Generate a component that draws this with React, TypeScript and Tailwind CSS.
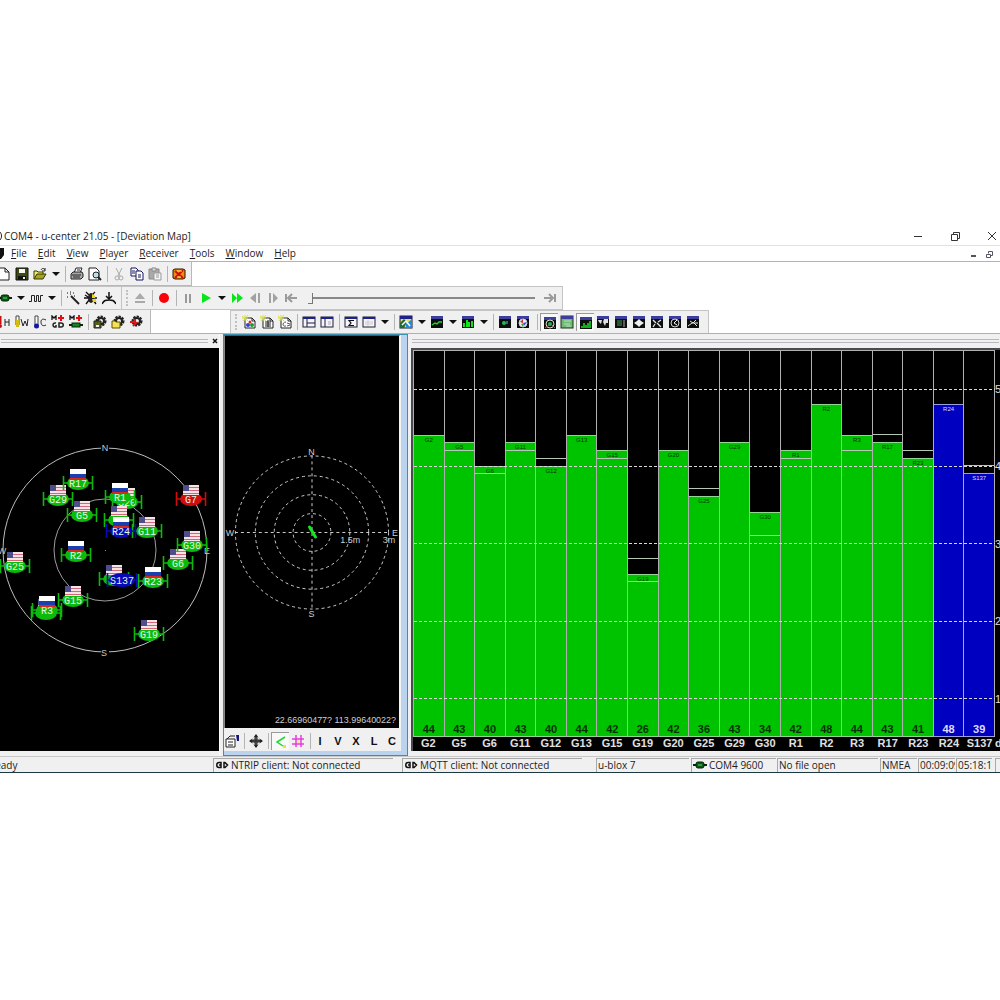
import React from "react";

type IconMap = Record<string, React.ReactNode>;

const windowFrame = (
  <>
    <rect x="1" y="2" width="12" height="10" fill="#f4f4fa" stroke="#1c1c38" />
    <rect x="1" y="2" width="12" height="2" fill="#20208a" />
  </>
);
const darkFrame = (
  <>
    <rect x="1" y="1" width="12" height="12" fill="#0c100c" />
    <rect x="1" y="1" width="12" height="3" fill="#3d3d9e" />
  </>
);
const chip = (
  <>
    <path d="M0 7H14" stroke="#052805" strokeWidth="2" />
    <rect x="3" y="4" width="8" height="6" rx="2" fill="#0b5a16" stroke="#032003" />
    <rect x="5" y="6" width="4" height="2" fill="#2f9b3c" />
  </>
);
const gear = (
  <>
    <circle cx="8" cy="6" r="4" fill="none" stroke="#222" strokeWidth="3" strokeDasharray="2 1" />
    <circle cx="8" cy="6" r="3" fill="none" stroke="#222" strokeWidth="2" />
  </>
);
const newPage = (
  <>
    <path d="M3 3H10L13 6V13H3Z" fill="#fff" stroke="#222" />
    <path d="M10 3V6H13" fill="none" stroke="#222" />
    <path d="M0 1L6 6M6 0L1 6M3 0V6M0 3H6" stroke="#d5df4a" />
  </>
);
const resetGlyph = (
  <>
    <path d="M1 5V1L3 3L5 1V5" fill="none" stroke="#111" strokeWidth="1.3" />
    <path d="M10 0V6M7 3H13" stroke="#e01010" strokeWidth="2" />
  </>
);

const icons: IconMap = {
  newDoc: <path d="M1 1H8L12 5V13H1ZM8 1V5H12" fill="#fff" stroke="#222" />,
  save: (
    <>
      <path d="M1 1H13V13H1Z" fill="#3d4a10" stroke="#111" />
      <path d="M4 2H10V6H4Z" fill="#f4f4f4" />
      <path d="M3 9H11V13H3Z" fill="#111" />
      <path d="M8 10H10V12H8Z" fill="#eee" />
    </>
  ),
  open: (
    <>
      <path d="M1 12V4H4L5 5H10V7" fill="#f0ea6c" stroke="#333a00" />
      <path d="M1 12L4 7H13L10 12Z" fill="#a8a320" stroke="#333a00" />
      <path d="M8 3C9 1 11 1 12 3M12 1V4H9" fill="none" stroke="#222" />
    </>
  ),
  print: (
    <>
      <path d="M4 6L6 1H12L10 6" fill="#fff" stroke="#222" />
      <path d="M1 7L3 5H12L13 7V10L11 12H1Z" fill="#aaa" stroke="#222" />
      <path d="M2 8H11M3 10H10M7 3H10" stroke="#222" />
    </>
  ),
  preview: (
    <>
      <path d="M1 1H8L11 4V13H1Z" fill="#fff" stroke="#222" />
      <circle cx="8" cy="8" r="3" fill="#b8e2e6" stroke="#222" />
      <path d="M10 10L13 13" stroke="#222" strokeWidth="2" />
    </>
  ),
  cut: (
    <>
      <path d="M4 1L8 9M10 1L6 9" stroke="#aaa" />
      <circle cx="5" cy="11" r="2" fill="none" stroke="#aaa" />
      <circle cx="9" cy="11" r="2" fill="none" stroke="#aaa" />
    </>
  ),
  copy: (
    <>
      <path d="M1 1H6L8 3V9H1Z" fill="#fff" stroke="#15155e" />
      <path d="M2 4H5M2 6H5" stroke="#15155e" />
      <path d="M6 4H11L13 6V13H6Z" fill="#fff" stroke="#15155e" />
      <path d="M8 8H11M8 10H11" stroke="#15155e" />
    </>
  ),
  paste: (
    <>
      <path d="M1 2H11V12H1Z" fill="#aaa" stroke="#888" />
      <path d="M4 1H8V4H4Z" fill="#ddd" stroke="#888" />
      <path d="M6 6H13V13H6Z" fill="#f4f4f4" stroke="#999" />
      <path d="M8 8H11M8 10H11" stroke="#999" />
    </>
  ),
  clear: (
    <>
      <path d="M1 3L3 2H11L13 3V11L11 12H3L1 11Z" fill="#ee8c16" stroke="#2c1400" />
      <path d="M3 4L11 11M11 3L3 11" stroke="#d40a0a" strokeWidth="2" />
      <path d="M5 4H10M5 10H9" stroke="#ffe14a" />
    </>
  ),
  connect: chip,
  wave: <path d="M0 10.5H2.5V4.5H5.5V10.5H7.5V4.5H9.5V10.5H11.5V4.5H14" fill="none" stroke="#222" />,
  wand: (
    <>
      <path d="M5 5L13 13" stroke="#222" strokeWidth="2" />
      <path d="M1 2H2M4 1H5M7 2H8M1 6H2M8 5H9M4 3H5" stroke="#555" strokeWidth="1.4" />
    </>
  ),
  bug: (
    <>
      <path d="M2 1L5 4M11 1L8 4M0 7H13M2 13L5 9M12 13L9 9M1 4L12 11" stroke="#111" strokeWidth="1.3" />
      <ellipse cx="7" cy="7" rx="3" ry="5" fill="#222" />
      <path d="M8 3L11 5V7H8ZM8 8H12V11H9Z" fill="#efd41a" />
    </>
  ),
  autobaud: <path d="M0 13C2 9 4 9 7 9S12 9 14 13M7 1V8M4 5L7 8L10 5" fill="none" stroke="#111" strokeWidth="1.5" />,
  eject: <path d="M7 2L12 8H2ZM2 10H12V12H2Z" fill="#aaa" />,
  record: <circle cx="7" cy="7" r="5" fill="#fb0007" />,
  pause: <path d="M5 3V12M9 3V12" stroke="#999" strokeWidth="2" />,
  play: <path d="M3 2L12 7L3 12Z" fill="#09e51b" />,
  forward: <path d="M2 2L7 7L2 12ZM7 2L13 7L7 12Z" fill="#09e51b" />,
  stepBack: <path d="M8 2V12L2 7ZM10 2H12V12H10Z" fill="#a2a2a2" />,
  stepNext: <path d="M3 2H5V12H3ZM7 2V12L12 7Z" fill="#a2a2a2" />,
  first: <path d="M2 3V11M13 7H5M8 3L4 7L8 11" fill="none" stroke="#9a9a9a" strokeWidth="2" />,
  last: <path d="M12 3V11M1 7H9M6 3L10 7L6 11" fill="none" stroke="#9a9a9a" strokeWidth="2" />,
  thermoH: (
    <>
      <path d="M3 1V9" stroke="#c81010" strokeWidth="3" />
      <circle cx="3" cy="11" r="2" fill="#c81010" />
      <path d="M8 4V11M12 4V11M8 7H12" stroke="#222" />
    </>
  ),
  thermoW: (
    <>
      <path d="M1 1H4V10H1Z" fill="#fff" stroke="#444" />
      <path d="M1 5H4V12H1Z" fill="#d4bd12" />
      <path d="M6 4L8 11L10 6L12 11L13 4" fill="none" stroke="#222" />
    </>
  ),
  thermoC: (
    <>
      <path d="M2 1H5V10H2Z" fill="#fff" stroke="#444" />
      <circle cx="3.5" cy="11" r="2.5" fill="#1515a8" />
      <path d="M13 5C9 3 8 5 8 7S9 12 13 10" fill="none" stroke="#222" />
    </>
  ),
  ntripReset: (
    <>
      {resetGlyph}
      <path d="M5 8C1 7 1 13 5 12V10M8 8H10C13 8 13 12 10 12H8Z" fill="none" stroke="#222" strokeWidth="1.5" />
    </>
  ),
  chipReset: (
    <>
      {resetGlyph}
      <path d="M0 10H14" stroke="#052805" strokeWidth="2" />
      <rect x="3" y="8" width="8" height="4" fill="#138326" stroke="#052805" />
    </>
  ),
  gearSave: (
    <>
      {gear}
      <path d="M1 6H8V13H1Z" fill="#586010" stroke="#222" />
      <path d="M3 10H6V12H3Z" fill="#eee" />
    </>
  ),
  gearOpen: (
    <>
      {gear}
      <path d="M1 6H4L5 7H9V13H1Z" fill="#f6e353" stroke="#5d5200" />
    </>
  ),
  gearReset: (
    <>
      {gear}
      <path d="M1 7H8M4 4L8 7L4 11" fill="none" stroke="#de1717" strokeWidth="2" />
      <circle cx="8" cy="6" r="1" fill="#fff" />
    </>
  ),
  pageColor: (
    <>
      {newPage}
      <circle cx="8" cy="7" r="1.5" fill="#e22" />
      <circle cx="6" cy="10" r="2" fill="#2b44d4" />
      <circle cx="10" cy="10" r="2" fill="#209b31" />
    </>
  ),
  pageTable: (
    <>
      {newPage}
      <path d="M5 7H11M5 9H11M5 11H11M8 5V12" stroke="#222" />
    </>
  ),
  pageCode: (
    <>
      {newPage}
      <path d="M8 7C4 7 4 12 8 11M9 8L12 9M9 11L12 10" fill="none" stroke="#555" />
    </>
  ),
  splitA: (
    <>
      {windowFrame}
      <path d="M5 4V12M5 8H13" stroke="#1c1c38" />
    </>
  ),
  splitB: (
    <>
      {windowFrame}
      <path d="M5 4V12" stroke="#1c1c38" />
      <path d="M8 7H11M8 9H11" stroke="#aaa" />
    </>
  ),
  sigma: (
    <>
      {windowFrame}
      <path d="M10 5.5H5L7 8L5 10.5H10" fill="none" stroke="#111" strokeWidth="1.2" />
    </>
  ),
  blank: (
    <>
      {windowFrame}
      <path d="M3 7H11M3 9H11M6 5V11" stroke="#ccc" />
    </>
  ),
  mapView: (
    <>
      <rect x="1" y="1" width="12" height="12" fill="#e7dc50" stroke="#161633" />
      <rect x="1" y="1" width="12" height="3" fill="#20208a" />
      <path d="M1 13V8L5 4L8 7L5 13Z" fill="#1d6a38" />
      <path d="M7 13V9L12 5L13 13Z" fill="#258bd4" />
      <path d="M3 10L7 6L11 11" fill="none" stroke="#fff" strokeWidth="1.5" />
    </>
  ),
  lineView: (
    <>
      {darkFrame}
      <path d="M2 10L5 8L7 9L9 7H12" fill="none" stroke="#20d33a" strokeWidth="1.4" />
    </>
  ),
  barView: (
    <>
      {darkFrame}
      <path d="M3 12V8M6 12V5M8 12V7M11 12V6" stroke="#10e61f" strokeWidth="2" />
    </>
  ),
  camera: (
    <>
      {darkFrame}
      <circle cx="6" cy="8" r="2" fill="#23bd4d" />
      <path d="M8 6H10V9H8Z" fill="#1f7284" />
    </>
  ),
  ring: (
    <>
      {darkFrame}
      <circle cx="7" cy="8" r="4" fill="#f0f0f0" stroke="#cfcfcf" />
      <path d="M4 7L7 4V8Z" fill="#d03131" />
      <path d="M7 8L11 7L8 11Z" fill="#3553d0" />
      <path d="M5 9L8 8L7 12Z" fill="#20b052" />
    </>
  ),
  sky: (
    <>
      {darkFrame}
      <circle cx="7" cy="8" r="4" fill="none" stroke="#d5ddd5" />
      <circle cx="7" cy="8" r="2" fill="#29ad3a" />
      <path d="M2 12L6 9M12 12L9 9" stroke="#db4f4f" />
    </>
  ),
  green: (
    <>
      <rect x="1" y="1" width="12" height="12" fill="#6fbb75" stroke="#203020" />
      <rect x="1" y="1" width="12" height="3" fill="#3d3d9e" />
      <path d="M4 6H11M4 9H10M6 11H11" stroke="#b6e3b8" />
    </>
  ),
  hist: (
    <>
      {darkFrame}
      <path d="M3 12V10M5 12V7M7 12V9M9 12V7M11 12V5" stroke="#10e61f" strokeWidth="1.5" />
    </>
  ),
  world: (
    <>
      {darkFrame}
      <path d="M2 5H6L5 9L3 7ZM8 4H12V8H10L9 11L7 7Z" fill="#e0e0e0" />
    </>
  ),
  table: (
    <>
      {darkFrame}
      <path d="M3 6H8M3 8H8M3 10H8" stroke="#3f9f49" />
      <path d="M10 5V12" stroke="#aaa" />
    </>
  ),
  compass: (
    <>
      {darkFrame}
      <path d="M7 4L9 6L12 8L9 10L7 12L5 10L2 8L5 6Z" fill="#f0f0f0" />
    </>
  ),
  cross: (
    <>
      {darkFrame}
      <path d="M3 5L6 8M11 5L8 7M7 8L11 12M3 12L5 9" stroke="#e8e8e8" strokeWidth="1.3" />
    </>
  ),
  clock: (
    <>
      {darkFrame}
      <circle cx="7" cy="8" r="4" fill="none" stroke="#d5d5d5" />
      <path d="M9 5L6 8L9 10" fill="none" stroke="#fff" />
    </>
  ),
  spark: (
    <>
      {darkFrame}
      <path d="M2 11L6 8H12M4 6L7 8L10 5M8 8L11 11" fill="none" stroke="#e8e8e8" />
    </>
  ),
  props: (
    <>
      <path d="M1 5H10V13H1Z" fill="#fff" stroke="#222" />
      <path d="M3 8H8M3 11H8M2 5L5 2H10" fill="none" stroke="#222" />
      <path d="M11 1H14V7H12Z" fill="#16167a" />
    </>
  ),
  center: (
    <>
      <path d="M7 1V13M1 7H13" stroke="#222" strokeWidth="1.3" />
      <path d="M4.5 3.5L7 0L9.5 3.5ZM4.5 10.5L7 14L9.5 10.5ZM3.5 4.5L0 7L3.5 9.5ZM10.5 4.5L14 7L10.5 9.5Z" fill="#222" />
      <path d="M5 5H9V9H5Z" fill="none" stroke="#222" />
    </>
  ),
  track: (
    <>
      <path d="M11 2L3 7L9 11" fill="none" stroke="#1ad930" strokeWidth="1.5" />
      <path d="M9 10H12V13H9Z" fill="#f0df2c" />
    </>
  ),
  grid: (
    <>
      <path d="M5 1V13M10 1V13M1 5H13M1 10H13" stroke="#e33ce0" strokeWidth="1.5" />
      <path d="M6 6H9V9H6Z" fill="#f8e49a" />
    </>
  ),
  link: (
    <>
      <path d="M6 4.5H4C1 4.5 1 9.5 4 9.5H6ZM4 7H6" fill="none" stroke="#111" strokeWidth="1.5" />
      <path d="M9 4.5H10L12.5 7L10 9.5H9Z" fill="none" stroke="#111" strokeWidth="1.5" />
    </>
  ),
};

function Icon({ name }: { name: string }) {
  return (
    <svg viewBox="0 0 14 14" className="h-[14px] w-[14px] shrink-0" aria-hidden="true">
      {icons[name]}
    </svg>
  );
}

function Tools({ items }: { items: string }) {
  return (
    <>
      {items.split(" ").map((item, i) => {
        if (item === "|") {
          return (
            <span key={i} className="flex w-[6px] shrink-0 justify-center">
              <span className="h-4 w-px bg-[#b4b4b4]" />
            </span>
          );
        }
        if (item === "v") {
          return (
            <button key={i} aria-label="More" className="flex w-[13px] shrink-0 items-center justify-center">
              <svg viewBox="0 0 8 4" className="h-1 w-2" aria-hidden="true">
                <path d="M0 0H8L4 4Z" fill="#111" />
              </svg>
            </button>
          );
        }
        if (item === ":") {
          return <span key={i} className="mr-[3px] ml-1 h-4 w-[2px] shrink-0 border-r-2 border-dotted border-[#c0c0c0]" />;
        }
        const pressed = item.startsWith("!");
        const name = pressed ? item.slice(1) : item;
        return (
          <button
            key={i}
            aria-label={name}
            className={
              pressed
                ? "flex h-[18px] w-[18px] shrink-0 items-center justify-center border-t border-l border-[#9a9a9a] bg-[#f8f8f8]"
                : "flex h-[18px] w-[18px] shrink-0 items-center justify-center"
            }
          >
            <Icon name={name} />
          </button>
        );
      })}
    </>
  );
}

const menus = ["File", "Edit", "View", "Player", "Receiver", "Tools", "Window", "Help"];

type Satellite = { id: string; x: number; y: number; color: string; flag?: "us" | "ru"; hidden?: boolean };
const G = "#0cba0c";
const B = "#0909b8";
/* Entries marked hidden sit under a neighbour, so their label is left out. */
const satellites: Satellite[] = [
  { id: "G29", x: 58, y: 151, color: G, flag: "us" },
  { id: "R17", x: 78, y: 135, color: G, flag: "ru" },
  { id: "G5", x: 82, y: 167, color: G, flag: "us" },
  { id: "G20", x: 127, y: 154, color: G, flag: "us" },
  { id: "R1", x: 120, y: 149, color: G, flag: "ru" },
  { id: "G12", x: 119, y: 172, color: G, flag: "us", hidden: true },
  { id: "G11", x: 147, y: 183, color: G, flag: "us" },
  { id: "R24", x: 121, y: 183, color: B, flag: "ru" },
  { id: "G7", x: 191, y: 151, color: "#d00c0c", flag: "us" },
  { id: "G6", x: 178, y: 215, color: G, flag: "us" },
  { id: "G30", x: 192, y: 197, color: G, flag: "us" },
  { id: "R2", x: 76, y: 207, color: G, flag: "ru" },
  { id: "G25", x: 15, y: 218, color: G, flag: "us" },
  { id: "G2", x: 114, y: 231, color: G, flag: "us", hidden: true },
  { id: "S137", x: 122, y: 232, color: B },
  { id: "R23", x: 153, y: 233, color: G, flag: "ru" },
  { id: "G15", x: 73, y: 252, color: G, flag: "us" },
  { id: "G13", x: 46, y: 265, color: G, flag: "us", hidden: true },
  { id: "R3", x: 47, y: 262, color: G, flag: "ru" },
  { id: "G19", x: 149, y: 286, color: G, flag: "us" },
];

function SatelliteMark({ sat }: { sat: Satellite }) {
  return (
    <g transform={`translate(${sat.x} ${sat.y})`}>
      <path d="M-14.5 0H14.5M-14.5 -7V7M14.5 -7V7" stroke={sat.color} strokeWidth="1.6" />
      <ellipse cx="0" cy="0" rx={sat.id.length > 3 ? 13 : 11} ry="7" fill={sat.color} />
      {sat.flag === "ru" && (
        <>
          <rect x="-8" y="-14" width="16" height="5" fill="#fff" />
          <rect x="-8" y="-9" width="16" height="4" fill="#1c3fae" />
          <rect x="-8" y="-5" width="16" height="2" fill="#d8281e" />
        </>
      )}
      {sat.flag === "us" && (
        <>
          <rect x="-8" y="-14" width="16" height="10" fill="#f6e3e6" />
          <path d="M-8 -11.5H8M-8 -8.5H8M-8 -5.5H8" stroke="#d2667c" />
          <rect x="-8" y="-14" width="6" height="6" fill="#4e4e8c" />
        </>
      )}
      {!sat.hidden && (
        <text y="4" textAnchor="middle" fontSize="10" fill="#e4f6e4">
          {sat.id}
        </text>
      )}
    </g>
  );
}

function SkyView() {
  return (
    <svg
      viewBox="0 0 219 403"
      preserveAspectRatio="xMinYMid slice"
      className="min-h-0 w-full flex-1 bg-black font-['Liberation_Mono',monospace]"
      role="img"
      aria-label="Satellite position view"
    >
      <circle cx="105" cy="202" r="102" fill="none" stroke="#bdbdbd" />
      <circle cx="105" cy="202" r="51" fill="none" stroke="#9c9c9c" />
      <rect x="105" y="202" width="1" height="1" fill="#888" />
      <g fill="#c8c8c8" fontSize="9" textAnchor="middle" className="font-['Liberation_Sans',sans-serif]">
        <rect x="101" y="97" width="8" height="6" fill="#000" />
        <rect x="101" y="301" width="8" height="6" fill="#000" />
        <text x="105" y="103">N</text>
        <text x="104" y="308">S</text>
        <text x="2" y="206">W</text>
        <text x="207" y="206">E</text>
      </g>
      {satellites.map((s) => (
        <SatelliteMark key={s.id} sat={s} />
      ))}
    </svg>
  );
}

function DeviationMap() {
  return (
    <svg
      viewBox="0 0 175 392"
      className="min-h-0 w-full flex-1 bg-black font-['Liberation_Sans',sans-serif]"
      role="img"
      aria-label="Deviation map"
    >
      <g fill="none" stroke="#cfcfcf" strokeDasharray="3 3">
        {[19, 38, 57, 77].map((r) => (
          <circle key={r} cx="87.5" cy="196.5" r={r} />
        ))}
        <path d="M87.5 119V274M10 196.5H165" />
      </g>
      <path d="M85 191L91 201" stroke="#12e81c" strokeWidth="3" strokeLinecap="round" />
      <g fill="#cfcfcf" fontSize="9" textAnchor="middle">
        <text x="87" y="119">N</text>
        <text x="87" y="281">S</text>
        <text x="5" y="200">W</text>
        <text x="171" y="200">E</text>
        <text x="126" y="207">1.5m</text>
        <text x="165" y="207">3m</text>
        <text x="172" y="388" textAnchor="end">22.66960477? 113.99640022?</text>
      </g>
    </svg>
  );
}

type Signal = { id: string; value: number; marks?: number[] };
const signals: Signal[] = [
  { id: "G2", value: 44 },
  { id: "G5", value: 43, marks: [42] },
  { id: "G6", value: 40, marks: [39] },
  { id: "G11", value: 43, marks: [42] },
  { id: "G12", value: 40, marks: [41] },
  { id: "G13", value: 44 },
  { id: "G15", value: 42, marks: [41] },
  { id: "G19", value: 26, marks: [28, 25] },
  { id: "G20", value: 42 },
  { id: "G25", value: 36, marks: [37] },
  { id: "G29", value: 43 },
  { id: "G30", value: 34, marks: [31] },
  { id: "R1", value: 42, marks: [41] },
  { id: "R2", value: 48 },
  { id: "R3", value: 44, marks: [42] },
  { id: "R17", value: 43, marks: [44] },
  { id: "R23", value: 41, marks: [42] },
  { id: "R24", value: 48 },
  { id: "S137", value: 39, marks: [40] },
];
/* The axis starts at 5 dB and shows just under 50 units. */
const pct = (v: number) => `${((v - 5.1) / 49.9) * 100}%`;

function SignalChart() {
  return (
    <div className="flex min-h-0 flex-1 overflow-hidden border-t-2 border-l-2 border-[#4a4a50] bg-black font-['Liberation_Sans',sans-serif]">
      <div className="flex min-w-0 flex-1 flex-col">
        <div className="relative flex min-h-0 flex-1 border-t border-l border-[#b0b0b0]">
          {signals.map((s) => {
            const blue = s.id === "R24" || s.id === "S137";
            return (
              <div key={s.id} className="relative flex min-w-0 flex-1 flex-col justify-end border-r border-[#b0b0b0]">
                <div
                  style={{ height: pct(s.value + 0.2) }}
                  className={
                    blue
                      ? "flex flex-col items-center justify-between border-t border-b border-[#9c9ce0] bg-[#0000c0] text-[#dcdcff]"
                      : "flex flex-col items-center justify-between border-t border-b border-[#90d890] bg-[#00c300] text-[#043004]"
                  }
                >
                  <span className="text-[6px] leading-[8px]">{s.id}</span>
                  <span className="text-[11px] leading-[14px] font-bold">{s.value}</span>
                </div>
                {s.marks?.map((m) => (
                  <span key={m} style={{ bottom: pct(m + 0.1) }} className="absolute inset-x-0 h-px bg-[#b4c8b4]" />
                ))}
              </div>
            );
          })}
          {[10, 20, 30, 40, 50].map((v) => (
            <span
              key={v}
              style={{ bottom: pct(v) }}
              className="absolute inset-x-0 h-px bg-[repeating-linear-gradient(90deg,#d8d8d8_0_3px,transparent_3px_5px)]"
            />
          ))}
        </div>
        <div className="flex h-[14px] shrink-0 text-[11px] leading-[13px] font-bold text-[#e0e0e0]">
          {signals.map((s) => (
            <span key={s.id} className="min-w-0 flex-1 text-center whitespace-nowrap">
              {s.id}
            </span>
          ))}
        </div>
      </div>
      <div className="flex w-[5px] shrink-0 flex-col overflow-hidden text-[11px] text-[#e0e0e0]">
        <div className="relative flex-1">
          {[10, 20, 30, 40, 50].map((v) => (
            <span key={v} style={{ bottom: pct(v) }} className="absolute left-0 translate-y-1/2 leading-3">
              {v}
            </span>
          ))}
        </div>
        <span className="h-[14px] leading-[13px] font-bold">dB</span>
      </div>
    </div>
  );
}

function Caption({ closable = false }: { closable?: boolean }) {
  return (
    <div className="flex h-[14px] shrink-0 items-center gap-1 px-px">
      <span className="h-1 flex-1 border-y border-[#b8b8c0]" />
      {closable && (
        <button aria-label="Close panel">
          <svg viewBox="0 0 6 6" className="h-[6px] w-[6px]" aria-hidden="true">
            <path d="M1 1L5 5M5 1L1 5" stroke="#111" strokeWidth="1.5" />
          </svg>
        </button>
      )}
    </div>
  );
}

const pane = "flex h-[14px] shrink-0 items-center gap-[2px] overflow-hidden border-t border-l border-[#a8a8a8] pl-[1px] whitespace-nowrap";

export default function App() {
  return (
    <div className="min-h-screen overflow-hidden bg-white py-[228px] font-['Open_Sans','Noto_Sans',sans-serif] text-[10px] text-[#1c1c1c]">
      <div className="flex flex-col">
        <header className="flex h-[18px] items-center justify-between border-b border-[#e2e2e2] pb-px">
          <div className="flex items-center gap-[1px]">
            <svg viewBox="0 0 3 10" className="h-[10px] w-[3px]" aria-hidden="true">
              <path d="M0 1C2 3 2 7 0 9" fill="none" stroke="#222" />
            </svg>
            <h1 className="leading-[14px] whitespace-nowrap">COM4 - u-center 21.05 - [Deviation Map]</h1>
          </div>
          <div className="flex items-center gap-[27px] pr-[3px]">
            <button aria-label="Minimize">
              <svg viewBox="0 0 10 10" className="h-[10px] w-[10px]" aria-hidden="true">
                <path d="M1 5.5H9" stroke="#333" />
              </svg>
            </button>
            <button aria-label="Restore">
              <svg viewBox="0 0 10 10" className="h-[10px] w-[10px]" aria-hidden="true">
                <path d="M1.5 3.5H7.5V9.5H1.5ZM3.5 3V1.5H9.5V7.5H8" fill="none" stroke="#333" />
              </svg>
            </button>
            <button aria-label="Close">
              <svg viewBox="0 0 10 10" className="h-[10px] w-[10px]" aria-hidden="true">
                <path d="M1 1L9 9M9 1L1 9" stroke="#333" />
              </svg>
            </button>
          </div>
        </header>

        <nav className="flex h-4 items-center justify-between border-b border-[#b4b4b4]">
          <div className="flex items-center">
            <svg viewBox="0 0 4 11" className="mr-[7px] h-[11px] w-1" aria-hidden="true">
              <path d="M0 0H4V7L1 11H0Z" fill="#111" />
            </svg>
            <div className="flex gap-[11px]">
              {menus.map((m) => (
                <button key={m} className="leading-[15px]">
                  <span className="underline underline-offset-1">{m[0]}</span>
                  {m.slice(1)}
                </button>
              ))}
            </div>
          </div>
          <div className="flex items-center gap-2 pr-[7px]">
            <button aria-label="Minimize child window">
              <svg viewBox="0 0 8 8" className="h-2 w-2" aria-hidden="true">
                <path d="M2 6H7" stroke="#555" strokeWidth="2" />
              </svg>
            </button>
            <button aria-label="Restore child window">
              <svg viewBox="0 0 8 8" className="h-2 w-2" aria-hidden="true">
                <path d="M1.5 4.5H5.5V7.5H1.5ZM3.5 3.5V1.5H7.5V5.5H6" fill="none" stroke="#556" />
              </svg>
            </button>
          </div>
        </nav>

        <div className="flex h-6">
          <div className="flex items-center border-r border-b border-[#b8b8b8] bg-[#f0f0f0] pr-[3px]">
            <div className="-ml-[5px] flex items-center">
              <Tools items="newDoc save open v | print preview | cut copy paste | clear" />
            </div>
          </div>
        </div>

        <div className="flex h-6">
          <div className="flex items-center border-t border-r border-b border-[#c4c4c4] bg-[#f0f0f0] pr-[3px]">
            <div className="-ml-1 flex items-center">
              <Tools items="connect v wave v | wand bug autobaud" />
            </div>
          </div>
          <div className="flex items-center border-t border-r border-b border-[#c4c4c4] bg-[#f0f0f0] pr-[3px]">
            <Tools items=": eject | record | pause play v forward stepBack stepNext first" />
            <input
              type="range"
              aria-label="Playback position"
              defaultValue={0}
              className="ml-2 h-3 w-[227px] appearance-none bg-[linear-gradient(#888,#888)] bg-[length:100%_2px] bg-center bg-no-repeat [&::-webkit-slider-thumb]:h-[11px] [&::-webkit-slider-thumb]:w-[5px] [&::-webkit-slider-thumb]:appearance-none [&::-webkit-slider-thumb]:border-r [&::-webkit-slider-thumb]:border-b [&::-webkit-slider-thumb]:border-[#777] [&::-webkit-slider-thumb]:bg-[#f0f0f0]"
            />
            <span className="w-[6px] shrink-0" />
            <Tools items="last" />
          </div>
        </div>

        <div className="flex h-6 border-b border-[#b0b0b0]">
          <div className="flex items-center border-r border-[#b8b8b8] bg-[#f0f0f0] pr-[5px]">
            <div className="-ml-[5px] flex items-center">
              <Tools items="thermoH thermoW thermoC ntripReset chipReset | gearSave gearOpen gearReset" />
            </div>
          </div>
          <div className="ml-[79px] flex items-center border-t border-r border-l border-[#c4c4c4] bg-[#f0f0f0] pr-[6px]">
            <Tools items=": pageColor pageTable pageCode | splitA splitB | sigma blank v | mapView v lineView v barView v | camera ring" />
            <span className="w-[2px] shrink-0" />
            <Tools items="| !sky green !hist world table compass cross clock spark" />
          </div>
        </div>

        <main className="flex h-[422px] bg-[#f0f0f0]">
          <section className="flex w-[22%] min-w-0 shrink-0 flex-col border-r border-[#fafafa] pb-[5px]">
            <Caption closable />
            <SkyView />
          </section>
          <section className="ml-[3px] flex w-[185px] shrink-0 flex-col border-r-[7px] border-b-[5px] border-[#bad4f0] bg-[#f0f0f0] outline-1 -outline-offset-1 outline-[#3c8fae]">
            <div className="flex min-h-0 flex-1 flex-col border-t-2 border-r-2 border-l-2 border-t-[#555] border-r-[#f4f4f4] border-l-[#888]">
              <DeviationMap />
            </div>
            <div className="flex h-[23px] shrink-0 items-center overflow-hidden pt-[3px]">
              <Tools items="props | center | !track grid" />
              <div className="ml-[3px] flex border-l border-[#b4b4b4] font-['Liberation_Sans',sans-serif] text-[11px] font-bold text-[#111]">
                {["I", "V", "X", "L", "C"].map((l) => (
                  <button key={l} className="w-[18px]">
                    {l}
                  </button>
                ))}
              </div>
            </div>
          </section>
          <section className="ml-[3px] flex min-w-0 flex-1 flex-col pb-[5px]">
            <Caption />
            <SignalChart />
          </section>
        </main>

        <footer className="flex h-[17px] items-center overflow-hidden border-t border-b border-t-[#c8c8c8] border-b-[#1d3a44] bg-[#f0f0f0] leading-[14px]">
          <span className="-ml-[11px] w-[224px] shrink-0">Ready</span>
          <div className={`${pane} mr-[9px] w-[180px]`}>
            <Icon name="link" />
            NTRIP client: Not connected
          </div>
          <div className={`${pane} mr-[14px] w-[180px]`}>
            <Icon name="link" />
            MQTT client: Not connected
          </div>
          <div className={`${pane} mr-[2px] w-[93px]`}>u-blox 7</div>
          <div className={`${pane} mr-[1px] w-[85px]`}>
            <Icon name="connect" />
            COM4 9600
          </div>
          <div className={`${pane} mr-[2px] w-[101px]`}>No file open</div>
          <div className={`${pane} mr-[1px] w-[37px]`}>NMEA</div>
          <div className={`${pane} mr-[1px] w-[37px]`}>00:09:09</div>
          <div className={`${pane} mr-[3px] w-[36px]`}>05:18:17</div>
          <div className={`${pane} min-w-0 flex-1`} />
        </footer>
      </div>
    </div>
  );
}
